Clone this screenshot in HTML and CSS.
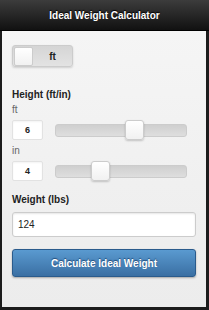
FILE: index.html
```html
<!DOCTYPE html>
<html>

<head>
  <title>Ideal Weight Calculator</title>
  <link rel="stylesheet" href="styles.css">
</head>

<body>
  <div class="page">
    <header class="page-header">
      <h1 class="page-title">Ideal Weight Calculator</h1>
    </header>
    <div class="content">
      <div class="flip-switch">
        <span class="flip-handle"></span>
        <span class="flip-label">ft</span>
      </div>

      <label class="field-title">Height (ft/in)</label>
      <label class="sub-label" for="feet">ft</label>
      <div class="slider-row">
        <input class="slider-value" type="text" id="feet" value="6">
        <div class="slider-track">
          <span class="slider-handle" style="left: 53%"></span>
        </div>
      </div>
      <label class="sub-label" for="inches">in</label>
      <div class="slider-row">
        <input class="slider-value" type="text" id="inches" value="4">
        <div class="slider-track">
          <span class="slider-handle" style="left: 27%"></span>
        </div>
      </div>

      <label class="field-title weight-title" for="weight">Weight (lbs)</label>
      <input class="text-input" type="text" id="weight" value="124">

      <button class="btn-calc">Calculate Ideal Weight</button>
    </div>
  </div>
</body>

</html>
```

FILE: styles.css
```css
body, html {
  margin: 0;
  padding: 0;
}

body {
  font-family: "Liberation Sans", Arial, sans-serif;
  background: #1c1c1c;
}

.page {
  width: 204px;
  height: 307px;
  margin-left: 2px;
  background: linear-gradient(#f6f6f6, #ececec);
  display: flex;
  flex-direction: column;
}

.page-header {
  height: 30px;
  background: linear-gradient(#3c3c3c, #111);
  border-bottom: 1px solid #000;
  margin-left: -2px;
  margin-right: -3px;
  display: flex;
  align-items: center;
  justify-content: center;
}

.page-title {
  margin: 0;
  font-size: 10px;
  font-weight: bold;
  color: #fff;
  text-shadow: 0 -1px 1px #000;
}

.content {
  padding: 14px 10px 0 10px;
  display: flex;
  flex-direction: column;
}

/* toggle */
.flip-switch {
  width: 59px;
  height: 20px;
  border: 1px solid #ccc;
  border-radius: 3px;
  background: linear-gradient(#d5d5d5, #e3e3e3);
  display: flex;
  align-items: center;
  box-shadow: 0 1px 2px rgba(0,0,0,0.15);
}

.flip-handle {
  width: 17px;
  height: 17px;
  margin-left: 1px;
  background: linear-gradient(#fff, #f1f1f1);
  border: 1px solid #ccc;
  border-radius: 2px;
}

.flip-label {
  flex: 1;
  text-align: center;
  font-size: 10px;
  font-weight: bold;
  color: #222;
}

.field-title {
  margin-top: 22px;
  font-size: 10px;
  font-weight: bold;
  color: #222;
  line-height: 12px;
}

.weight-title {margin-top: 13px;}

.sub-label {
  font-size: 10px;
  color: #666;
  line-height: 12px;
  margin-top: 3px;
}

.sub-label + .slider-row {margin-top: 4px;}
.slider-row + .sub-label {margin-top: 5px;}

.slider-row {
  display: flex;
  align-items: center;
  gap: 12px;
}

.slider-value {
  box-sizing: border-box;
  width: 31px;
  height: 20px;
  margin: 0;
  padding: 0;
  border: 1px solid #e2e2e2;
  border-radius: 2px;
  background: #fff;
  text-align: center;
  font-family: inherit;
  font-size: 9px;
  font-weight: bold;
  color: #222;
  box-shadow: inset 0 1px 2px rgba(0,0,0,0.05);
}

.slider-track {
  position: relative;
  flex: 1;
  height: 11px;
  margin-right: 9px;
  border: 1px solid #ccc;
  border-radius: 3px;
  background: linear-gradient(#cfcfcf, #dedede);
}

.slider-handle {
  position: absolute;
  top: -5px;
  width: 17px;
  height: 18px;
  background: linear-gradient(#fff, #f1f1f1);
  border: 1px solid #ccc;
  border-radius: 3px;
  box-shadow: 0 1px 2px rgba(0,0,0,0.2);
}

.field-title + .text-input {margin-top: 6px;}

.text-input {
  box-sizing: border-box;
  height: 25px;
  margin: 0;
  padding: 0 5px;
  border: 1px solid #ccc;
  border-radius: 3px;
  background: #fff;
  font-family: inherit;
  font-size: 10px;
  color: #222;
  box-shadow: inset 0 1px 2px rgba(0,0,0,0.1);
}

.btn-calc {
  margin-top: 12px;
  height: 28px;
  border: 1px solid #2a5b8c;
  border-radius: 3px;
  background: linear-gradient(#5a9ad0, #3a6fa3);
  color: #fff;
  font-family: inherit;
  font-size: 10px;
  font-weight: bold;
  text-shadow: 0 -1px 1px #1f4b7a;
  box-shadow: 0 1px 2px rgba(0,0,0,0.3);
}
```
